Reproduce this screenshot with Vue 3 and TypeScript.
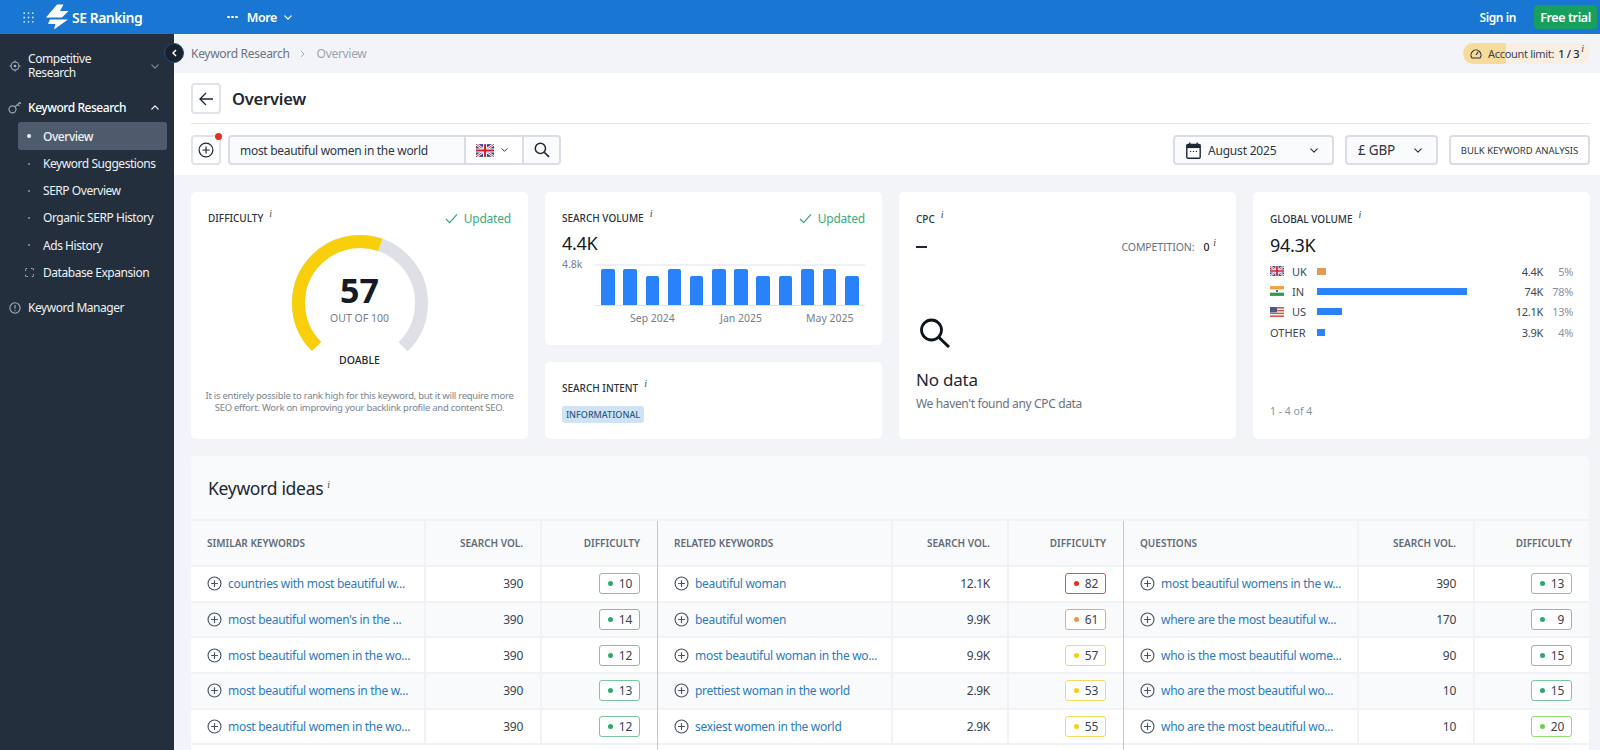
<script setup lang="ts">
type Row = { name: string; vol: string; diff: number };

const subNav = ["Overview", "Keyword Suggestions", "SERP Overview", "Organic SERP History", "Ads History"];

const trend = [1, 1, 0, 1, 0, 1, 1, 0, 0, 1, 1, 0];

const globalRows = [
  { flag: "uk", code: "UK", width: 9, color: "#e39a56", vol: "4.4K", pct: "5%" },
  { flag: "in", code: "IN", width: 150, color: "#2a82fb", vol: "74K", pct: "78%" },
  { flag: "us", code: "US", width: 25, color: "#2a82fb", vol: "12.1K", pct: "13%" },
  { flag: "", code: "OTHER", width: 8, color: "#2a82fb", vol: "3.9K", pct: "4%" },
];

const groups: { title: string; rows: Row[] }[] = [
  {
    title: "Similar keywords",
    rows: [
      { name: "countries with most beautiful w...", vol: "390", diff: 10 },
      { name: "most beautiful women's in the ...", vol: "390", diff: 14 },
      { name: "most beautiful women in the wo...", vol: "390", diff: 12 },
      { name: "most beautiful womens in the w...", vol: "390", diff: 13 },
      { name: "most beautiful women in the wo...", vol: "390", diff: 12 },
    ],
  },
  {
    title: "Related keywords",
    rows: [
      { name: "beautiful woman", vol: "12.1K", diff: 82 },
      { name: "beautiful women", vol: "9.9K", diff: 61 },
      { name: "most beautiful woman in the wo...", vol: "9.9K", diff: 57 },
      { name: "prettiest woman in the world", vol: "2.9K", diff: 53 },
      { name: "sexiest women in the world", vol: "2.9K", diff: 55 },
    ],
  },
  {
    title: "Questions",
    rows: [
      { name: "most beautiful womens in the w...", vol: "390", diff: 13 },
      { name: "where are the most beautiful w...", vol: "170", diff: 9 },
      { name: "who is the most beautiful wome...", vol: "90", diff: 15 },
      { name: "who are the most beautiful wo...", vol: "10", diff: 15 },
      { name: "who are the most beautiful wo...", vol: "10", diff: 20 },
    ],
  },
];

function diffColor(d: number) {
  if (d >= 80) return "#e0301e";
  if (d >= 60) return "#e8954f";
  if (d >= 50) return "#f8cf0a";
  if (d >= 20) return "#6fd04f";
  return "#2fa870";
}

function badgeBorder(d: number) {
  if (d >= 80) return "#d0593f";
  if (d >= 60) return "#e8a877";
  if (d >= 50) return "#f8d860";
  if (d >= 20) return "#93dc6f";
  return "#7cc4a4";
}

// arco de 270 graus, o valor preenche a parte amarela
const R = 61.5;
const ARC = 2 * Math.PI * R * 0.75;
const filled = (ARC * 57) / 100;
</script>

<template>
  <div class="page">
    <svg class="defs" width="0" height="0">
      <symbol id="uk" viewBox="0 0 20 14">
        <rect width="20" height="14" fill="#27408b" />
        <path d="M0 0L20 14M20 0L0 14" stroke="#fff" stroke-width="3" />
        <path d="M0 0L20 14M20 0L0 14" stroke="#cf2030" stroke-width="1" />
        <path d="M10 0V14M0 7H20" stroke="#fff" stroke-width="4.5" />
        <path d="M10 0V14M0 7H20" stroke="#cf2030" stroke-width="2.4" />
      </symbol>
      <symbol id="in" viewBox="0 0 20 14">
        <rect width="20" height="14" fill="#fff" />
        <rect width="20" height="4.6" fill="#f5a040" />
        <rect y="9.4" width="20" height="4.6" fill="#2f9a50" />
        <circle cx="10" cy="7" r="1.5" fill="#2d3f80" />
      </symbol>
      <symbol id="us" viewBox="0 0 20 14">
        <rect width="20" height="14" fill="#f3e6dc" />
        <path d="M0 1H20M0 5H20M0 9H20M0 13H20" stroke="#cc5a48" stroke-width="2" />
        <rect width="10" height="7.5" fill="#4a5a8a" />
      </symbol>
      <symbol id="plus" viewBox="0 0 16 16">
        <circle cx="8" cy="8" r="6.9" fill="none" stroke="currentColor" stroke-width="1.2" />
        <path d="M8 4.4V11.6M4.4 8H11.6" stroke="currentColor" stroke-width="1.2" fill="none" />
      </symbol>
      <symbol id="chev" viewBox="0 0 10 6">
        <path d="M1 1L5 5L9 1" fill="none" stroke="currentColor" stroke-width="1.5" stroke-linecap="round" stroke-linejoin="round" />
      </symbol>
      <symbol id="check" viewBox="0 0 14 12">
        <path d="M1 6.5L5 10.5L13 1.5" fill="none" stroke="currentColor" stroke-width="1.3" />
      </symbol>
    </svg>

    <header class="topbar">
      <svg class="grid-icon" viewBox="0 0 11 11" width="11" height="11">
        <g fill="#cfe2f6">
          <circle v-for="n in 9" :key="n" :cx="1.2 + ((n - 1) % 3) * 4.3" :cy="1.2 + Math.floor((n - 1) / 3) * 4.3" r="0.9" />
        </g>
      </svg>
      <svg class="logo" viewBox="0 0 24 26" width="24" height="26">
        <path d="M12 0.5L18.5 0.5L15 7L23.5 7L17 13.5L1 13.5Z" fill="#fff" />
        <path d="M5 15.5L23 15.5L9 25.5L10.5 20L3 20Z" fill="#fff" />
      </svg>
      <span class="brand">SE Ranking</span>
      <div class="more">
        <span class="dots"><i></i><i></i><i></i></span>
        <span>More</span>
        <svg class="more-chev" width="8" height="5"><use href="#chev" /></svg>
      </div>
      <div class="spacer"></div>
      <span class="signin">Sign in</span>
      <span class="trial">Free trial</span>
    </header>

    <div class="body">
      <aside class="sidebar">
        <div class="nav-main nav-two">
          <svg class="nav-icon" viewBox="0 0 14 14" width="12" height="12">
            <circle cx="7" cy="7" r="4.6" fill="none" stroke="#a9b3bf" stroke-width="1.2" />
            <circle cx="7" cy="7" r="1.6" fill="#a9b3bf" />
            <path d="M7 0.5V2.4M7 11.6V13.5M0.5 7H2.4M11.6 7H13.5" stroke="#a9b3bf" stroke-width="1.1" />
          </svg>
          <span class="nav-label">Competitive<br />Research</span>
          <svg class="nav-chev dim" width="8" height="5"><use href="#chev" /></svg>
        </div>
        <div class="nav-main nav-key">
          <svg class="nav-icon" viewBox="0 0 15 14" width="14" height="13">
            <circle cx="4.8" cy="9" r="3.8" fill="none" stroke="#9aa5b2" stroke-width="1.3" />
            <path d="M7.6 6.4L12.5 1.6M10.4 3.6L12.2 5.2M12.5 1.6L14 3" stroke="#9aa5b2" stroke-width="1.3" fill="none" />
          </svg>
          <span class="nav-label strong">Keyword Research</span>
          <svg class="nav-chev up" width="8" height="5"><use href="#chev" /></svg>
        </div>
        <div v-for="(item, i) in subNav" :key="item" class="nav-sub" :class="{ active: i === 0 }">
          <i class="bullet"></i>
          <span>{{ item }}</span>
        </div>
        <div class="nav-sub">
          <svg class="exp" viewBox="0 0 9 9" width="9" height="9">
            <path d="M0.5 3V0.5H3M6 0.5H8.5V3M8.5 6V8.5H6M3 8.5H0.5V6" fill="none" stroke="#a9b3bf" stroke-width="1.1" stroke-dasharray="1.6 1" />
          </svg>
          <span>Database Expansion</span>
        </div>
        <div class="nav-main nav-manager">
          <svg class="nav-icon" viewBox="0 0 14 14" width="12" height="12">
            <circle cx="7" cy="7" r="6" fill="none" stroke="#a9b3bf" stroke-width="1.2" />
            <path d="M7 3.6V8" stroke="#a9b3bf" stroke-width="1.3" />
            <circle cx="7" cy="10" r="0.8" fill="#a9b3bf" />
          </svg>
          <span class="nav-label">Keyword Manager</span>
        </div>
      </aside>

      <main class="main">
        <button class="collapse" type="button">
          <svg width="5" height="8" viewBox="0 0 5 8">
            <path d="M4 1L1 4L4 7" fill="none" stroke="#fff" stroke-width="1.5" />
          </svg>
        </button>

        <div class="crumbs">
          <span class="crumb">Keyword Research</span>
          <svg class="crumb-sep" width="5" height="8" viewBox="0 0 5 8">
            <path d="M1 1L4 4L1 7" fill="none" stroke="#a8afba" stroke-width="1" />
          </svg>
          <span class="crumb light">Overview</span>
          <div class="limit">
            <svg width="12" height="11" viewBox="0 0 12 11">
              <path d="M2 10A5 5 0 1 1 10 10Z" fill="none" stroke="#27303c" stroke-width="1.1" />
              <path d="M6 7L8.2 3.8" stroke="#27303c" stroke-width="1.1" />
            </svg>
            <span class="limit-text">Account limit:</span>
            <span class="limit-num">1 / 3</span>
            <em class="info">i</em>
          </div>
        </div>

        <section class="head">
          <div class="title-row">
            <button class="back" type="button">
              <svg width="15" height="14" viewBox="0 0 15 14">
                <path d="M14 7H1.5M7 1L1 7L7 13" fill="none" stroke="#1e2733" stroke-width="1.3" />
              </svg>
            </button>
            <h1>Overview</h1>
          </div>
          <div class="controls">
            <div class="add-wrap">
              <button class="add" type="button">
                <svg width="16" height="16" class="add-icon"><use href="#plus" /></svg>
              </button>
              <i class="red-dot"></i>
            </div>
            <div class="search">
              <span class="query">most beautiful women in the world</span>
              <div class="flag-cell">
                <svg width="18" height="13"><use href="#uk" /></svg>
                <svg class="small-chev" width="7" height="4"><use href="#chev" /></svg>
              </div>
              <div class="lens-cell">
                <svg width="16" height="16" viewBox="0 0 15 15">
                  <circle cx="6" cy="6" r="4.8" fill="none" stroke="#1e2733" stroke-width="1.4" />
                  <path d="M9.6 9.6L14 14" stroke="#1e2733" stroke-width="1.6" />
                </svg>
              </div>
            </div>
            <div class="spacer"></div>
            <div class="select date">
              <svg width="15" height="17" viewBox="0 0 15 17">
                <rect x="0.8" y="2.5" width="13.4" height="13.7" rx="1.2" fill="#fff" stroke="#1e2733" stroke-width="1.4" />
                <rect x="0.8" y="2.5" width="13.4" height="3.6" fill="#1e2733" />
                <path d="M3.8 0.5V3M11.2 0.5V3" stroke="#1e2733" stroke-width="1.4" />
                <path d="M4 9.5H5.2M6.9 9.5H8.1M9.8 9.5H11" stroke="#1e2733" stroke-width="1.2" />
              </svg>
              <span class="select-text">August 2025</span>
              <svg class="small-chev end" width="8" height="5"><use href="#chev" /></svg>
            </div>
            <div class="select currency">
              <span class="select-text big">£ GBP</span>
              <svg class="small-chev end" width="8" height="5"><use href="#chev" /></svg>
            </div>
            <button class="bulk" type="button">BULK KEYWORD ANALYSIS</button>
          </div>
        </section>

        <section class="cards">
          <article class="card difficulty">
            <div class="card-top">
              <span class="label">DIFFICULTY<em class="info">i</em></span>
              <span class="updated"><svg width="13" height="11"><use href="#check" /></svg>Updated</span>
            </div>
            <div class="gauge">
              <svg width="140" height="120" viewBox="0 0 140 120">
                <g transform="translate(70 70) rotate(135)" fill="none" stroke-width="13">
                  <circle :r="R" stroke="#dfe0e6" :stroke-dasharray="`${ARC} 1000`" />
                  <circle :r="R" stroke="#f8cf0a" :stroke-dasharray="`${filled} 1000`" />
                </g>
              </svg>
              <div class="gauge-val">
                <strong>57</strong>
                <span>OUT OF 100</span>
              </div>
            </div>
            <div class="doable">DOABLE</div>
            <p class="hint">It is entirely possible to rank high for this keyword, but it will require more SEO effort. Work on improving your backlink profile and content SEO.</p>
          </article>

          <div class="stack">
            <article class="card volume">
              <div class="card-top">
                <span class="label">SEARCH VOLUME<em class="info">i</em></span>
                <span class="updated"><svg width="13" height="11"><use href="#check" /></svg>Updated</span>
              </div>
              <div class="big-num">4.4K</div>
              <div class="chart">
                <span class="axis">4.8k</span>
                <div class="chart-main">
                  <div class="plot">
                    <i v-for="(b, i) in trend" :key="i" :class="b ? 'tall' : 'short'"></i>
                  </div>
                  <div class="months">
                    <span style="grid-column: 2 / span 3">Sep 2024</span>
                    <span style="grid-column: 6 / span 3">Jan 2025</span>
                    <span style="grid-column: 10 / span 3">May 2025</span>
                  </div>
                </div>
              </div>
            </article>
            <article class="card intent">
              <span class="label">SEARCH INTENT<em class="info">i</em></span>
              <div><span class="intent-tag">INFORMATIONAL</span></div>
            </article>
          </div>

          <article class="card cpc">
            <span class="label">CPC<em class="info">i</em></span>
            <div class="cpc-row">
              <span class="dash"></span>
              <span class="competition">COMPETITION:<b>0</b><em class="info">i</em></span>
            </div>
            <svg class="nodata-icon" width="32" height="30" viewBox="0 0 32 30">
              <circle cx="12.5" cy="12" r="10" fill="none" stroke="#0e141c" stroke-width="2.8" />
              <path d="M20 19.5L30 29" stroke="#0e141c" stroke-width="3" />
            </svg>
            <div class="nodata">No data</div>
            <div class="nodata-sub">We haven't found any CPC data</div>
          </article>

          <article class="card global">
            <span class="label">GLOBAL VOLUME<em class="info">i</em></span>
            <div class="big-num">94.3K</div>
            <div class="global-rows">
              <div v-for="r in globalRows" :key="r.code" class="global-row">
                <span class="country">
                  <svg v-if="r.flag" width="14" height="10"><use :href="`#${r.flag}`" /></svg>
                  <span>{{ r.code }}</span>
                </span>
                <span class="bar-cell"><i :style="{ width: r.width + 'px', background: r.color }"></i></span>
                <span class="g-vol">{{ r.vol }}</span>
                <span class="g-pct">{{ r.pct }}</span>
              </div>
            </div>
            <div class="pager">1 - 4 of 4</div>
          </article>
        </section>

        <section class="ideas">
          <h2>Keyword ideas<em class="info">i</em></h2>
          <div class="groups">
            <div v-for="g in groups" :key="g.title" class="group">
              <div class="row thead">
                <span class="c-name">{{ g.title }}</span>
                <span class="c-num">Search vol.</span>
                <span class="c-num">Difficulty</span>
              </div>
              <div v-for="(r, i) in g.rows" :key="i" class="row" :class="i % 2 ? 'alt' : 'plain'">
                <span class="c-name">
                  <svg width="15" height="15" class="row-plus"><use href="#plus" /></svg>
                  <a class="kw">{{ r.name }}</a>
                </span>
                <span class="c-num val">{{ r.vol }}</span>
                <span class="c-num">
                  <span class="badge" :style="{ borderColor: badgeBorder(r.diff) }">
                    <i :style="{ background: diffColor(r.diff) }"></i>{{ r.diff }}
                  </span>
                </span>
              </div>
            </div>
          </div>
        </section>
      </main>
    </div>
  </div>
</template>

<style>
html,
body {
  height: 100%;
  overflow: hidden;
}
</style>

<style scoped>
.page {
  height: 750px;
  overflow: hidden;
  display: flex;
  flex-direction: column;
  font-family: "Noto Sans", "Open Sans", sans-serif;
  color: #1e2733;
  background: #f3f4f8;
}

.defs {
  position: absolute;
}

.spacer {
  flex: 1;
}

.info {
  font-family: "Liberation Serif", serif;
  font-style: italic;
  font-size: 10px;
  font-weight: 400;
  color: #3c4652;
  margin-left: 6px;
  position: relative;
  top: -5px;
}

/* topbar */
.topbar {
  height: 34px;
  flex: none;
  background: #1976d2;
  color: #fff;
  display: flex;
  align-items: center;
  padding-left: 23px;
  padding-right: 3px;
}

.logo {
  margin-left: 11px;
}

.brand {
  margin-left: 3px;
  font-size: 14px;
  font-weight: 600;
  letter-spacing: -0.5px;
}

.more {
  margin-left: 85px;
  display: flex;
  align-items: center;
  font-size: 12.5px;
  font-weight: 600;
  letter-spacing: -0.4px;
}

.dots {
  display: flex;
  gap: 1.5px;
  margin-right: 9px;
}

.dots i {
  width: 2.5px;
  height: 2.5px;
  border-radius: 50%;
  background: #fff;
}

.more-chev {
  margin-left: 7px;
  color: #fff;
}

.signin {
  font-size: 12px;
  font-weight: 600;
  letter-spacing: -0.4px;
  margin-right: 18px;
}

.trial {
  width: 63px;
  height: 24px;
  background: #17a05d;
  border-radius: 4px;
  font-size: 12.5px;
  font-weight: 600;
  letter-spacing: -0.4px;
  display: flex;
  align-items: center;
  justify-content: center;
}

.body {
  flex: 1;
  display: flex;
  min-height: 0;
}

/* sidebar */
.sidebar {
  width: 174px;
  flex: none;
  background: #232f3d;
  color: #eef1f5;
  font-size: 12px;
  letter-spacing: -0.45px;
  padding-top: 18px;
}

.nav-main {
  display: flex;
  align-items: center;
  padding-left: 8px;
  position: relative;
}

.nav-icon {
  width: 14px;
  flex: none;
  margin-right: 6px;
}

.nav-two {
  height: 28px;
  line-height: 14px;
}

.nav-key {
  margin-top: 18px;
  height: 18px;
  margin-bottom: 6px;
}

.nav-manager {
  margin-top: 12px;
  height: 20px;
}

.strong {
  font-weight: 500;
  color: #fff;
}

.nav-chev {
  position: absolute;
  right: 15px;
  color: #fff;
}

.nav-chev.dim {
  color: #7d8996;
}

.nav-chev.up {
  transform: rotate(180deg);
}

.nav-sub {
  height: 27.2px;
  margin-left: 18px;
  margin-right: 7px;
  border-radius: 3px;
  display: flex;
  align-items: center;
  padding-left: 7px;
  position: relative;
}

.nav-sub span {
  position: absolute;
  left: 25px;
}

.nav-sub.active {
  background: #4e5b6c;
  height: 28px;
  font-weight: 500;
}

.bullet {
  width: 2px;
  height: 2px;
  border-radius: 50%;
  background: #8f9aa7;
  margin-left: 3px;
}

.active .bullet {
  width: 4px;
  height: 4px;
  margin-left: 2px;
  background: #fff;
}

.exp {
  margin-left: 0;
}

/* main */
.main {
  flex: 1;
  min-width: 0;
  position: relative;
}

.collapse {
  position: absolute;
  left: -10px;
  top: 9px;
  width: 20px;
  height: 20px;
  padding: 0;
  border-radius: 50%;
  border: 1px solid #2c4a6a;
  background: #18222e;
  display: grid;
  place-items: center;
  z-index: 2;
}

.crumbs {
  height: 39px;
  display: flex;
  align-items: center;
  padding: 0 10px 0 17px;
  font-size: 12px;
  letter-spacing: -0.3px;
  background: #f3f4f8;
}

.crumb {
  color: #69737f;
}

.crumb.light {
  color: #9aa3ae;
}

.crumb-sep {
  margin: 0 12px 0 10px;
}

.limit {
  margin-left: auto;
  width: 127px;
  height: 21px;
  box-sizing: border-box;
  border-radius: 11px;
  background: linear-gradient(90deg, #f7db9a 0 43px, #f8efe2 43px);
  display: flex;
  align-items: center;
  padding-left: 7px;
  font-size: 11px;
  color: #3c4652;
  white-space: nowrap;
}

.limit-text {
  margin-left: 6px;
  letter-spacing: -0.3px;
}

.limit-num {
  margin-left: 4px;
  color: #1e2733;
  font-weight: 500;
}

.limit .info {
  margin-left: 2px;
}

.head {
  height: 102px;
  box-sizing: border-box;
  background: #fff;
  padding: 10px 10px 0 17px;
}

.title-row {
  display: flex;
  align-items: center;
  padding-bottom: 9px;
  border-bottom: 1px solid #e3e5ee;
  height: 31px;
  box-sizing: content-box;
}

.back {
  width: 30px;
  height: 31px;
  padding: 0;
  border: 2px solid #e0e3ea;
  border-radius: 4px;
  background: #fff;
  display: grid;
  place-items: center;
}

h1 {
  margin: 0 0 0 11px;
  font-size: 16.5px;
  font-weight: 600;
  letter-spacing: -0.2px;
}

.controls {
  display: flex;
  align-items: stretch;
  height: 30px;
  margin-top: 11px;
}

.add-wrap {
  position: relative;
  margin-right: 7px;
}

.add {
  width: 30px;
  height: 30px;
  padding: 0;
  border: 2px solid #e0e3ea;
  border-radius: 4px;
  background: #fff;
  display: grid;
  place-items: center;
}

.add-icon {
  color: #1e2733;
}

.red-dot {
  position: absolute;
  right: -1px;
  top: -2px;
  width: 7px;
  height: 7px;
  border-radius: 50%;
  background: #e0301e;
}

.search {
  width: 333px;
  box-sizing: border-box;
  border: 2px solid #dadde6;
  border-radius: 4px;
  display: flex;
  align-items: center;
  background: #fafbfd;
}

.query {
  flex: 1;
  padding-left: 10px;
  font-size: 12px;
  letter-spacing: -0.3px;
  color: #2f3946;
}

.flag-cell {
  width: 58px;
  height: 100%;
  border-left: 2px solid #dadde6;
  display: flex;
  align-items: center;
  padding-left: 10px;
  box-sizing: border-box;
  background: #fff;
}

.small-chev {
  color: #2f3946;
  margin-left: 7px;
}

.small-chev.end {
  margin-left: auto;
}

.lens-cell {
  width: 37px;
  height: 100%;
  border-left: 2px solid #dadde6;
  display: grid;
  place-items: center;
  box-sizing: border-box;
}

.select {
  box-sizing: border-box;
  border: 2px solid #dadde6;
  border-radius: 4px;
  background: #fafbfd;
  display: flex;
  align-items: center;
  padding: 0 14px 0 11px;
  margin-right: 11px;
}

.date {
  width: 161px;
}

.currency {
  width: 93px;
  padding-left: 11px;
}

.select-text {
  margin-left: 7px;
  font-size: 12px;
  letter-spacing: -0.2px;
  color: #2f3946;
}

.select-text.big {
  margin-left: 0;
  font-size: 13.5px;
}

.bulk {
  width: 141px;
  box-sizing: border-box;
  border: 2px solid #dadde6;
  border-radius: 4px;
  background: #fff;
  padding: 0;
  font-family: inherit;
  font-size: 9.5px;
  letter-spacing: 0;
  color: #2f3946;
}

/* cards */
.cards {
  display: grid;
  grid-template-columns: repeat(4, 337px);
  gap: 17px;
  padding: 17px 0 0 17px;
  height: 247px;
  box-sizing: content-box;
}

.card {
  background: #fff;
  border-radius: 5px;
  padding: 20px 17px 0;
  box-sizing: border-box;
  height: 100%;
  min-height: 0;
}

.stack {
  display: grid;
  grid-template-rows: 153px 77px;
  row-gap: 17px;
  min-height: 0;
}

.card-top {
  display: flex;
  justify-content: space-between;
  align-items: center;
  height: 14px;
  margin-top: -1px;
}

.label {
  display: block;
  line-height: 14px;
  font-size: 10px;
  font-weight: 500;
  color: #2a3340;
  letter-spacing: 0;
  white-space: nowrap;
}

.updated {
  display: flex;
  align-items: center;
  gap: 6px;
  color: #3ea97c;
  font-size: 12px;
  letter-spacing: -0.2px;
}

.updated svg {
  color: #2fa870;
}

.gauge {
  position: relative;
  width: 140px;
  height: 120px;
  margin: 8px auto 0;
}

.gauge-val {
  position: absolute;
  left: 0;
  right: 0;
  top: 38px;
  display: flex;
  flex-direction: column;
  align-items: center;
}

.gauge-val strong {
  font-size: 34px;
  line-height: 38px;
  font-weight: 700;
  color: #141b26;
}

.gauge-val span {
  font-size: 10.5px;
  line-height: 14px;
  margin-top: 2px;
  color: #77808b;
}

.doable {
  text-align: center;
  font-size: 10.5px;
  font-weight: 500;
  line-height: 14px;
  color: #1e2733;
}

.hint {
  margin: 23px -6px 0;
  text-align: center;
  font-size: 9.5px;
  line-height: 12px;
  letter-spacing: -0.27px;
  color: #7b8490;
}

.big-num {
  font-size: 18px;
  line-height: 22px;
  margin-top: 7px;
  color: #141b26;
  letter-spacing: -0.3px;
}

.chart {
  display: flex;
  margin-top: 10px;
}

.axis {
  width: 33px;
  flex: none;
  margin-top: -6px;
  font-size: 10.5px;
  line-height: 12px;
  color: #77808b;
}

.chart-main {
  flex: 1;
}

.plot {
  height: 42px;
  box-sizing: border-box;
  border-top: 2px solid #f0f1f6;
  border-bottom: 1px solid #dfe2ea;
  display: grid;
  grid-template-columns: repeat(12, 1fr);
  align-items: end;
  padding: 0 2px;
  justify-items: center;
}

.plot i {
  width: 13.5px;
  background: #2a82fb;
  border-radius: 2px 2px 0 0;
}

.plot .tall {
  height: 36px;
}

.plot .short {
  height: 29px;
}

.months {
  display: grid;
  grid-template-columns: repeat(12, 1fr);
  padding: 0 2px;
  margin-top: 6px;
  font-size: 10.5px;
  line-height: 12px;
  color: #77808b;
  text-align: center;
  white-space: nowrap;
}

.intent {
  padding-top: 19px;
}

.intent-tag {
  display: inline-block;
  margin-top: 10px;
  height: 17px;
  line-height: 17px;
  width: 82px;
  text-align: center;
  border-radius: 3px;
  background: #cfe3f4;
  color: #2c5a80;
  font-size: 9px;
  font-weight: 500;
}

.cpc-row {
  display: flex;
  justify-content: space-between;
  align-items: center;
  height: 14px;
  margin-top: 13px;
}

.dash {
  width: 11px;
  height: 1.5px;
  background: #1e2733;
}

.competition {
  font-size: 10.5px;
  letter-spacing: -0.1px;
  color: #647484;
  white-space: nowrap;
  padding-right: 3px;
}

.competition b {
  font-weight: 500;
  color: #1e2733;
  margin-left: 9px;
}

.competition .info {
  margin-left: 4px;
}

.nodata-icon {
  display: block;
  margin-top: 64px;
  margin-left: 3px;
}

.nodata {
  margin-top: 20px;
  font-size: 17px;
  line-height: 24px;
  color: #1e2733;
  letter-spacing: -0.2px;
}

.nodata-sub {
  margin-top: 3px;
  font-size: 12px;
  line-height: 18px;
  letter-spacing: -0.35px;
  color: #69737f;
}

.global-rows {
  margin-top: 5px;
}

.global-row {
  display: flex;
  align-items: center;
  height: 20.3px;
  font-size: 11px;
  color: #3c4652;
}

.country {
  width: 47px;
  flex: none;
  display: flex;
  align-items: center;
  gap: 8px;
}

.bar-cell {
  flex: 1;
  display: flex;
  align-items: center;
}

.bar-cell i {
  height: 7px;
  display: block;
}

.g-vol {
  letter-spacing: -0.3px;
}

.g-pct {
  width: 30px;
  text-align: right;
  color: #8b939e;
  letter-spacing: -0.3px;
}

.pager {
  margin-top: 62px;
  font-size: 10.5px;
  line-height: 14px;
  color: #8b939e;
}

/* keyword ideas */
.ideas {
  margin: 17px 0 0 17px;
  width: 1398px;
  background: #f9fafc;
  border-radius: 5px 5px 0 0;
}

h2 {
  margin: 0;
  height: 63px;
  box-sizing: border-box;
  padding: 19px 0 0 17px;
  font-size: 17.5px;
  line-height: 26px;
  font-weight: 400;
  color: #1e2733;
  letter-spacing: -0.3px;
}

h2 .info {
  margin-left: 4px;
  top: -7px;
}

.groups {
  display: grid;
  grid-template-columns: repeat(3, 1fr);
  border-top: 2px solid #f1f2f6;
}

.group + .group {
  border-left: 1px solid #c3c8d0;
}

.group {
  min-width: 0;
  background: #fff;
  padding-bottom: 24px;
}

.row {
  display: grid;
  grid-template-columns: 233px 116px 1fr;
  height: 35.7px;
  box-sizing: border-box;
  border-bottom: 2px solid #f1f2f6;
  font-size: 12px;
  letter-spacing: -0.3px;
}

.row > span {
  display: flex;
  align-items: center;
  min-width: 0;
}

.row > span + span {
  border-left: 2px solid #f1f2f6;
}

.thead {
  height: 46px;
  background: #f9fafc;
  font-size: 10px;
  font-weight: 600;
  color: #626c78;
  text-transform: uppercase;
  letter-spacing: 0;
}

.alt {
  background: #f9fafc;
}

.c-name {
  padding-left: 16px;
  white-space: nowrap;
  overflow: hidden;
}

.c-num {
  justify-content: flex-end;
  padding-right: 17px;
}

.val {
  color: #3a4450;
}

.row-plus {
  flex: none;
  margin-right: 6px;
  color: #4a5562;
}

.kw {
  color: #2e7ac4;
}

.badge {
  width: 41px;
  height: 21px;
  box-sizing: border-box;
  border: 1px solid;
  border-radius: 3px;
  background: #fff;
  display: flex;
  align-items: center;
  justify-content: space-between;
  padding: 0 7px 0 8px;
  color: #3a4450;
}

.badge i {
  width: 5px;
  height: 5px;
  border-radius: 50%;
}
</style>
